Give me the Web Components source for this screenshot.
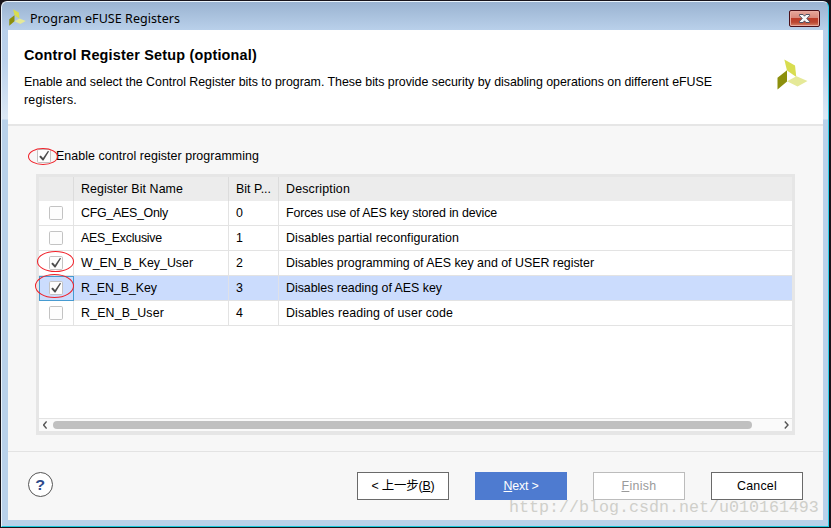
<!DOCTYPE html>
<html lang="en">
<head>
<meta charset="utf-8">
<title>Program eFUSE Registers</title>
<style>
html,body{margin:0;height:100%;overflow:hidden}
body{font:12.4px/18px "Liberation Sans","Noto Sans CJK SC",sans-serif;color:#000;background:#000}
</style>
</head>
<body>
<efuse-dialog></efuse-dialog>
<script>
const define = (name, html, setup) => {
  const t = document.createElement('template');
  t.innerHTML = html;
  customElements.define(name, class extends HTMLElement {
    connectedCallback() {
      if (this.shadowRoot) return;
      this.attachShadow({mode: 'open'}).append(t.content.cloneNode(true));
      if (setup) setup.call(this, this.shadowRoot);
    }
  });
};

/* A line of text spread evenly over the width given in its "w" attribute. */
define('fit-text', `<style>:host{display:inline-block;white-space:pre}span{display:inline-block}</style><span><slot></slot></span>`,
  function (root) {
    const s = root.querySelector('span'), w = +this.getAttribute('w');
    const n = this.textContent.length;
    const natural = s.getBoundingClientRect().width;
    if (w && natural) s.style.letterSpacing = ((w - natural) / n) + 'px';
  });

define('vendor-logo', `<style>:host{display:block;width:31px;height:31px}svg{display:block;width:100%;height:100%}</style>
<svg viewBox="0 0 31 31"><path d="M7.3 0.5 18 6.5 19.3 18 10 11.5Z" fill="#d8dd50"/><path d="M0.5 18.8 10 11.3V22.5L0.5 30.5Z" fill="#8c8f0c"/><path d="M10 22.3 19.5 17.3 30.5 22 20.5 27.5Z" fill="#e5e998"/></svg>`);

define('check-box', `<style>
:host{display:block;width:14px;height:14px}
svg{display:block;overflow:visible}
path{display:none}:host([checked]) path{display:block}
</style>
<svg width="14" height="14"><rect x=".5" y=".5" width="13" height="13" rx="1.2" fill="#fdfdfd" stroke="#c3c3c3"/><path d="M2.2 7.7 3.8 6.6 6 9 11 1.8 12 2.5 6.5 11.5 5.6 11.5Z" fill="#4c4c4c"/></svg>`);

define('red-ring', `<style>:host{position:absolute;display:block;border:1px solid #f02028;border-radius:50%;box-sizing:border-box;pointer-events:none;z-index:2}</style>`);

define('close-button', `<style>
:host{display:block;box-sizing:border-box;width:31px;height:17px;border:1px solid #4b1018;border-radius:2px;box-shadow:inset 0 0 0 1px #e9aaa0;background:linear-gradient(#e7a79b 0,#d9887b 46%,#bd3c28 50%,#bb4631 75%,#d88467 100%)}
svg{display:block}
</style><svg width="29" height="15"><path d="M9.5 3.5h3.6l1.4 1.7 1.4-1.7h3.6v1.2l-2.7 2.8 2.7 2.8v1.2h-3.6l-1.4-1.7-1.4 1.7H9.5v-1.2l2.7-2.8-2.7-2.8Z" fill="#f8f8f8" stroke="#4d5061"/></svg>`);

define('title-bar', `<style>
:host{display:flex;align-items:flex-start;height:29px;box-sizing:border-box;padding:8px 8px 0 7px}
vendor-logo{width:17px;height:17px;margin-top:-1px}
.t{flex:1;padding-left:4px;margin-top:-1px;font:12.5px/19px "Noto Sans","Open Sans",sans-serif}
close-button{margin-top:0}
</style><vendor-logo></vendor-logo><div class="t"><slot></slot></div><close-button></close-button>`);

define('page-header', `<style>
:host{display:flex;justify-content:space-between;background:#fff;height:96px;box-sizing:border-box;border-bottom:2px solid #e6e6e6;padding:16px 15px 0 16px}
.h{font-weight:bold;font-size:14.4px;line-height:18px;height:18px;margin-bottom:9px}
.l{height:18px}
vendor-logo{margin-top:13px}
</style><div><div class="h"><slot name="heading"></slot></div><div class="l"><slot name="line1"></slot></div><div class="l"><slot name="line2"></slot></div></div><vendor-logo></vendor-logo>`);

define('bit-row', `<style>
:host{display:grid;grid-template-columns:35px 155px 50px 1fr;height:25px;box-sizing:border-box;background:#fff;line-height:24px}
div{height:25px;border-right:1px solid #e3e3e3;border-bottom:1px solid #e3e3e3;box-sizing:border-box;padding-left:7px;white-space:nowrap;position:relative}
div:last-of-type{border-right:0}
.c{padding:5px 0 0 10px}
:host([selected]){background:#cbdcfd}
:host([selected]) div{border-right-color:#dfe1e8}
:host([selected]) .c{outline:1px solid #479bd1;outline-offset:-1px;border-bottom-color:#479bd1}
:host([head]){background:#ececec;height:24px}
:host([head]) div{height:24px;border-bottom:0;border-right-color:#dcdcdc}
:host([head]) check-box{display:none}
</style><div class="c"><check-box></check-box><slot name="mark"></slot></div><div><slot name="name"></slot></div><div><slot name="pos"></slot></div><div><slot name="desc"></slot></div>`,
  function (root) { if (this.hasAttribute('checked')) root.querySelector('check-box').setAttribute('checked', ''); });

define('scroll-bar', `<style>
:host{display:flex;align-items:center;height:13px;box-sizing:border-box;border-top:1px solid #e3e3e3;background:#fafafa;padding:0 2px 0 4px}
.track{flex:1;padding:0 32px 0 6px}.thumb{height:8px;border-radius:4px;background:#c0c0c0}
svg{display:block}path{fill:none;stroke:#555;stroke-width:1.4}
</style><svg width="4" height="8"><path d="M3.6 .5 .6 4 3.6 7.5"/></svg><div class="track"><div class="thumb"></div></div><svg width="6" height="8"><path d="M.8 .5 4 4 .8 7.5"/></svg>`);

define('bit-table', `<style>
:host{display:flex;flex-direction:column;height:261px;box-sizing:border-box;border:3px solid #e6e6e6;border-bottom-width:4px;background:#fff}
.rows{flex:1}
</style><div class="rows"><slot></slot></div><scroll-bar></scroll-bar>`);

define('dialog-button', `<style>
:host{display:flex;align-items:center;justify-content:center;width:92px;height:28px;box-sizing:border-box;border:1px solid #6a6a6a;background:#fff}
:host([primary]){background:#4e7bd0;border-color:#4e7bd0;color:#fff}
:host([off]){border-color:#bcbcbc;color:#9a9a9a}
</style><slot></slot>`);

define('help-button', `<style>
:host{display:flex;align-items:center;justify-content:center;width:25px;height:25px;box-sizing:border-box;border:1px solid #555;border-radius:50%;background:#fff;color:#2f4b8c;font-weight:bold;font-size:14px}
span{display:block;transform:scaleX(1.15)}
</style><span>?</span>`);

define('efuse-dialog', `<style>
:host{display:block;position:relative;width:831px;height:528px;box-sizing:border-box;overflow:hidden;padding:1px 2px 1px 1px;background:#17131a}
.win{height:526px;box-sizing:border-box;border:1px solid #eaf3fb;border-right-color:#2bcfe9;border-bottom-color:#1bc8dc;border-radius:6px 6px 0 0;background:linear-gradient(#9ab3d1,#b9d0ea 28px,#bcd2ec 60px,#dce8f5 117px,#b9d1ea 118px)}
title-bar{height:28px}
.body{margin:0 5px 0 6px;height:490px;background:#f7f7f7;display:flex;flex-direction:column}
.main{flex:1;padding:21px 28px 0}
.enable{display:flex;position:relative;height:18px;align-items:center;padding-left:1px;margin-bottom:9px}
.enable check-box{margin:0 5px 1px 0}
.foot{height:69px;box-sizing:border-box;border-top:1px solid #e3e3e3;padding:20px 20px 0;display:flex;align-items:flex-start;gap:26px}
help-button{margin-right:auto}
.water{position:absolute;left:509px;top:498px;font:16.67px/20px "Liberation Mono",monospace;color:#cfcfca;white-space:nowrap}
</style>
<div class="win">
<title-bar><fit-text w="150">Program eFUSE Registers</fit-text></title-bar>
<div class="body">
<page-header>
<fit-text slot="heading" w="233">Control Register Setup (optional)</fit-text>
<fit-text slot="line1" w="688">Enable and select the Control Register bits to program. These bits provide security by disabling operations on different eFUSE</fit-text>
<fit-text slot="line2" w="53">registers.</fit-text>
</page-header>
<div class="main">
<div class="enable"><check-box checked></check-box><fit-text w="203">Enable control register programming</fit-text><red-ring style="left:-8px;top:1px;width:30px;height:17px"></red-ring></div>
<bit-table>
<bit-row head><fit-text slot="name" w="102">Register Bit Name</fit-text><fit-text slot="pos" w="35">Bit P...</fit-text><fit-text slot="desc" w="64">Description</fit-text></bit-row>
<bit-row><fit-text slot="name" w="87">CFG_AES_Only</fit-text><span slot="pos">0</span><fit-text slot="desc" w="211">Forces use of AES key stored in device</fit-text></bit-row>
<bit-row><fit-text slot="name" w="81">AES_Exclusive</fit-text><span slot="pos">1</span><fit-text slot="desc" w="173">Disables partial reconfiguration</fit-text></bit-row>
<bit-row checked><red-ring slot="mark" style="left:-2px;top:0;width:37px;height:21px"></red-ring><fit-text slot="name" w="112">W_EN_B_Key_User</fit-text><span slot="pos">2</span><fit-text slot="desc" w="308">Disables programming of AES key and of USER register</fit-text></bit-row>
<bit-row checked selected><red-ring slot="mark" style="left:-4px;top:-2px;width:39px;height:24px"></red-ring><fit-text slot="name" w="76">R_EN_B_Key</fit-text><span slot="pos">3</span><fit-text slot="desc" w="156">Disables reading of AES key</fit-text></bit-row>
<bit-row><fit-text slot="name" w="83">R_EN_B_User</fit-text><span slot="pos">4</span><fit-text slot="desc" w="167">Disables reading of user code</fit-text></bit-row>
</bit-table>
</div>
<div class="foot">
<help-button></help-button>
<dialog-button><fit-text w="63">&lt; 上一步(<u>B</u>)</fit-text></dialog-button>
<dialog-button primary><fit-text w="35"><u>N</u>ext &gt;</fit-text></dialog-button>
<dialog-button off><fit-text w="35"><u>F</u>inish</fit-text></dialog-button>
<dialog-button><fit-text w="40">Cancel</fit-text></dialog-button>
</div>
</div>
</div>
<div class="water">http://blog.csdn.net/u010161493</div>`);
</script>
</body>
</html>
